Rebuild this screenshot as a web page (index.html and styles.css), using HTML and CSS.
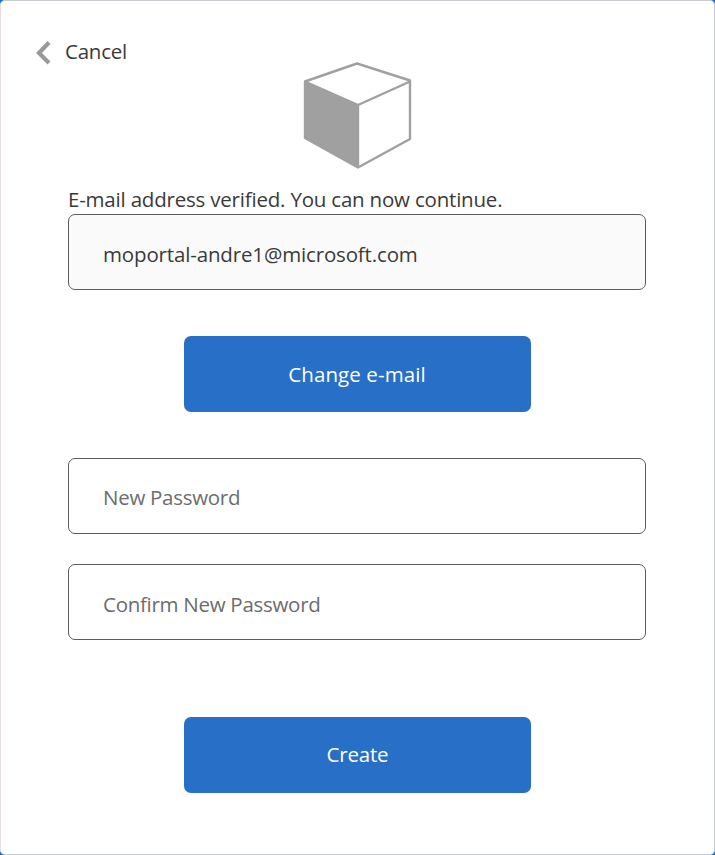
FILE: index.html
```html
<!DOCTYPE html>
<html lang="en">
<head>
<meta charset="utf-8">
<title>Create account</title>
<link rel="stylesheet" href="styles.css">
</head>
<body>
<main class="card">
  <a class="cancel"><svg class="chevron" viewBox="0 0 16 24" width="16" height="24"><path d="M14 3.500 4 14l10 10" fill="none" stroke="#999" stroke-width="4.200"/></svg><span class="t-cancel">Cancel</span></a>
  <svg class="logo" viewBox="0 0 110 110" width="110" height="110">
    <path d="M3 21 56 44V106L3 77Z" fill="#a0a0a0"/>
    <path d="M3 20.500 55 2.500 108 19.500V78L56 106.500 3 77ZM3 20.500 56 44 108 20.500M56 44V106" fill="none" stroke="#a0a0a0" stroke-width="2.400" stroke-linejoin="round"/>
  </svg>
  <form class="form">
    <p class="message">E-mail address verified. You can now continue.</p>
    <div class="field verified"><span class="t-email">moportal-andre1@microsoft.com</span></div>
    <button type="button" class="button change">Change e-mail</button>
    <div class="field hint">New Password</div>
    <div class="field hint confirm">Confirm New Password</div>
    <button type="button" class="button create">Create</button>
  </form>
</main>
</body>
</html>
```
FILE: styles.css
```css
* { box-sizing: border-box; }
body { margin: 0; background: #1a70c4; font: 20.5px/28px "Open Sans", "Noto Sans", sans-serif; color: #3a3a3a; }
.card { height: 855px; border: 1px solid #c8ccd0; border-left-color: #e4dfdd; border-radius: 5px; background: #fff; padding: 36px 68px 0 67px; display: flex; flex-direction: column; }
.cancel { display: flex; align-items: center; height: 28px; margin-left: -33px; gap: 14px; letter-spacing: -0.25px; }
.chevron { overflow: visible; }
.logo { display: block; align-self: center; margin: -4px 0 0; }
.form { display: flex; flex-direction: column; margin-top: 14px; }
.message { margin: 0; height: 29px; letter-spacing: -0.2px; }
.field { height: 76px; border: 1px solid #5c5c5c; border-radius: 7px; padding: 1px 34px 0; display: flex; align-items: center; }
.verified { background: #fafafa; padding-top: 4px; }
.t-email { letter-spacing: -0.15px; }
.hint { color: #6c6c6c; letter-spacing: -0.28px; }
.confirm { margin-top: 30px; padding-top: 3px; }
.button { width: 347px; height: 76px; border: 0; border-radius: 7px; background: #286fc8; color: #fff; font: inherit; align-self: center; padding: 0; }
.change { margin: 46px 0; letter-spacing: 0.1px; }
.create { margin-top: 77px; padding: 0 0 2px 1px; letter-spacing: -0.2px; }
```
